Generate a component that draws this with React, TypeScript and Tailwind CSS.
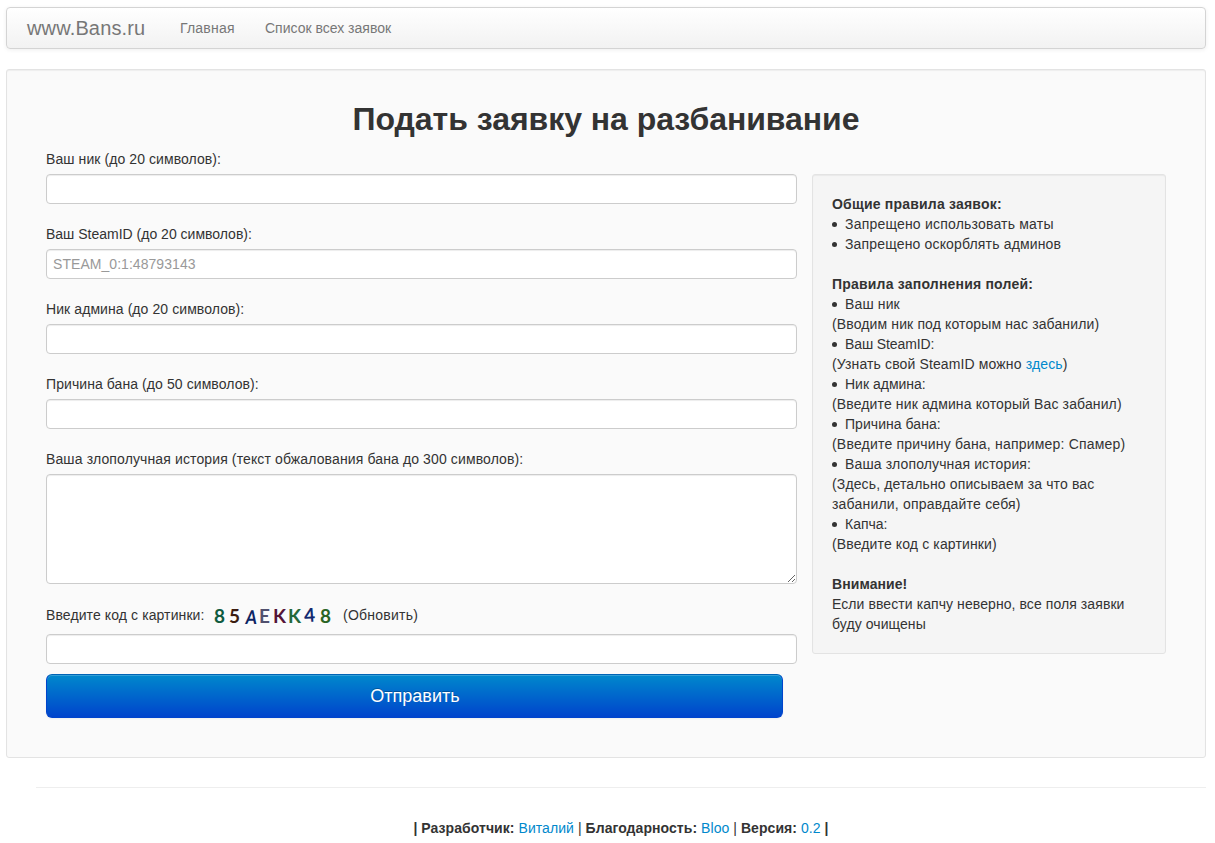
import React from "react";

const inputClass =
  "block h-[30px] w-[751px] rounded-[4px] border border-[#cccccc] bg-white px-[6px] py-[4px] text-[14px] leading-[20px] tracking-[0.05px] text-[#555555] shadow-[inset_0_1px_1px_rgba(0,0,0,0.075)] outline-none placeholder:text-[#999999]";

const captcha = [
  { char: "8", style: "text-[#0f5a40] -translate-x-[1px]" },
  { char: "5", style: "text-[#3c1c10] -translate-x-[1px]" },
  { char: "A", style: "text-[#0c2463] translate-x-[1px] translate-y-[1px] skew-x-[-8deg] scale-x-[0.85]" },
  { char: "E", style: "text-[#50506e] -translate-x-[1px]" },
  { char: "K", style: "text-[#541438] -translate-x-[1px]" },
  { char: "K", style: "text-[#24683a] -translate-x-[1px]" },
  { char: "4", style: "text-[#122a70] -translate-x-[1px] -translate-y-[1px] rotate-[-4deg]" },
  { char: "8", style: "text-[#2a6424]" },
];

function Field({ label, placeholder, tracking = "tracking-[0.08px]" }: { label: string; placeholder?: string; tracking?: string }) {
  return (
    <label className="mb-[20px] block">
      <span className={"mb-[5px] block " + tracking}>{label}</span>
      <input type="text" placeholder={placeholder} className={inputClass} />
    </label>
  );
}

function Bullet({ children }: { children: React.ReactNode }) {
  return (
    <div className="flex items-center">
      <span className="mt-[1px] mr-[8.5px] size-[4.5px] rounded-full bg-[#333333]" />
      {children}
    </div>
  );
}

function Link({ children }: { children: React.ReactNode }) {
  return <a href="#" className="text-[#0088cc]">{children}</a>;
}

export default function App() {
  return (
    <div className="h-[843px] w-[1215px] overflow-hidden bg-white pt-[7px] pl-[6px] font-['Liberation_Sans',Arial,sans-serif] text-[14px] leading-[20px] text-[#333333]">
      <nav className="flex h-[42px] w-[1200px] items-center rounded-[4px] border border-[#d4d4d4] bg-linear-to-b from-white to-[#f2f2f2] pl-[20px] text-[#777777] shadow-[0_1px_4px_rgba(0,0,0,0.065)]">
        <a href="#" className="w-[153px] text-[20px] tracking-[0.15px]">www.Bans.ru</a>
        <a href="#" className="w-[85px] tracking-[0.2px]">Главная</a>
        <a href="#">Список всех заявок</a>
      </nav>

      <main className="mt-[20px] h-[689px] w-[1200px] rounded-[3px] border border-[#e3e3e3] bg-[#fafafa] px-[39px] pt-[29px] shadow-[inset_0_1px_1px_rgba(0,0,0,0.05)]">
        <h1 className="h-[50px] text-center text-[32px] leading-[40px] font-bold tracking-[-0.04px]">Подать заявку на разбанивание</h1>
        <div className="flex items-start">
          <form className="w-[766px]">
            <Field label="Ваш ник (до 20 символов):" />
            <Field label="Ваш SteamID (до 20 символов):" placeholder="STEAM_0:1:48793143" tracking="tracking-normal" />
            <Field label="Ник админа (до 20 символов):" />
            <Field label="Причина бана (до 50 символов):" />
            <label className="block">
              <span className="mb-[5px] block tracking-[0.12px]">Ваша злополучная история (текст обжалования бана до 300 символов):</span>
              <textarea className="block h-[110px] w-[751px] rounded-[4px] border border-[#cccccc] bg-white px-[6px] py-[4px] shadow-[inset_0_1px_1px_rgba(0,0,0,0.075)] outline-none" />
            </label>
            <div className="mt-[21px] mb-[9px] flex h-[20px] items-center">
              <span className="w-[167px] tracking-[0.1px]">Введите код с картинки:</span>
              <span className="flex w-[130px] pt-[1px] font-['Lato',sans-serif] text-[19px] leading-[20px] font-bold">
                {captcha.map((item, index) => (
                  <span key={index} className={"inline-block w-[15px] text-center " + item.style}>{item.char}</span>
                ))}
              </span>
              <a href="#" className="tracking-[0.25px]">(Обновить)</a>
            </div>
            <input type="text" className={inputClass} />
            <button
              type="button"
              className="mt-[10px] block h-[44px] w-[737px] rounded-[6px] border border-[#0044cc] border-t-[#0063b5] bg-[linear-gradient(to_bottom,#0088cc,#0044cc)] pl-[1px] text-[18px] text-white shadow-[inset_0_1px_0_rgba(255,255,255,0.2),0_1px_2px_rgba(0,0,0,0.05)] [text-shadow:0_-1px_0_rgba(0,0,0,0.25)]"
            >
              Отправить
            </button>
          </form>

          <aside className="mt-[25px] h-[480px] w-[354px] rounded-[3px] border border-[#e3e3e3] bg-[#f5f5f5] p-[19px] tracking-[0.13px] shadow-[inset_0_1px_1px_rgba(0,0,0,0.05)]">
            <section className="mb-[20px] tracking-[0.2px]">
              <h2 className="font-bold">Общие правила заявок:</h2>
              <Bullet>Запрещено использовать маты</Bullet>
              <Bullet><span className="tracking-[0.16px]">Запрещено оскорблять админов</span></Bullet>
            </section>
            <section className="mb-[20px]">
              <h2 className="font-bold tracking-[0.2px]">Правила заполнения полей:</h2>
              <Bullet>Ваш ник</Bullet>
              <p>(Вводим ник под которым нас забанили)</p>
              <Bullet><span className="tracking-[-0.1px]">Ваш SteamID:</span></Bullet>
              <p className="tracking-[0.13px]">(Узнать свой SteamID можно <Link>здесь</Link>)</p>
              <Bullet><span className="tracking-normal">Ник админа:</span></Bullet>
              <p>(Введите ник админа который Вас забанил)</p>
              <Bullet><span className="tracking-[0.05px]">Причина бана:</span></Bullet>
              <p className="tracking-[0.2px]">(Введите причину бана, например: Спамер)</p>
              <Bullet>Ваша злополучная история:</Bullet>
              <p>(Здесь, детально описываем за что вас<br /><span className="tracking-[0.2px]">забанили, оправдайте себя)</span></p>
              <Bullet><span className="tracking-normal">Капча:</span></Bullet>
              <p>(Введите код с картинки)</p>
            </section>
            <section className="tracking-[0.08px]">
              <h2 className="font-bold">Внимание!</h2>
              <p>Если ввести капчу неверно, все поля заявки<br />буду очищены</p>
            </section>
          </aside>
        </div>
      </main>

      <footer className="mt-[29px] ml-[30px] w-[1170px] border-t border-[#eeeeee] pt-[30px]">
        <p className="text-center tracking-[0.06px]">
          <b>| Разработчик: </b><Link>Виталий</Link> | <b>Благодарность: </b><Link>Bloo</Link> | <b>Версия: </b><Link>0.2</Link> <b>|</b>
        </p>
      </footer>
    </div>
  );
}
